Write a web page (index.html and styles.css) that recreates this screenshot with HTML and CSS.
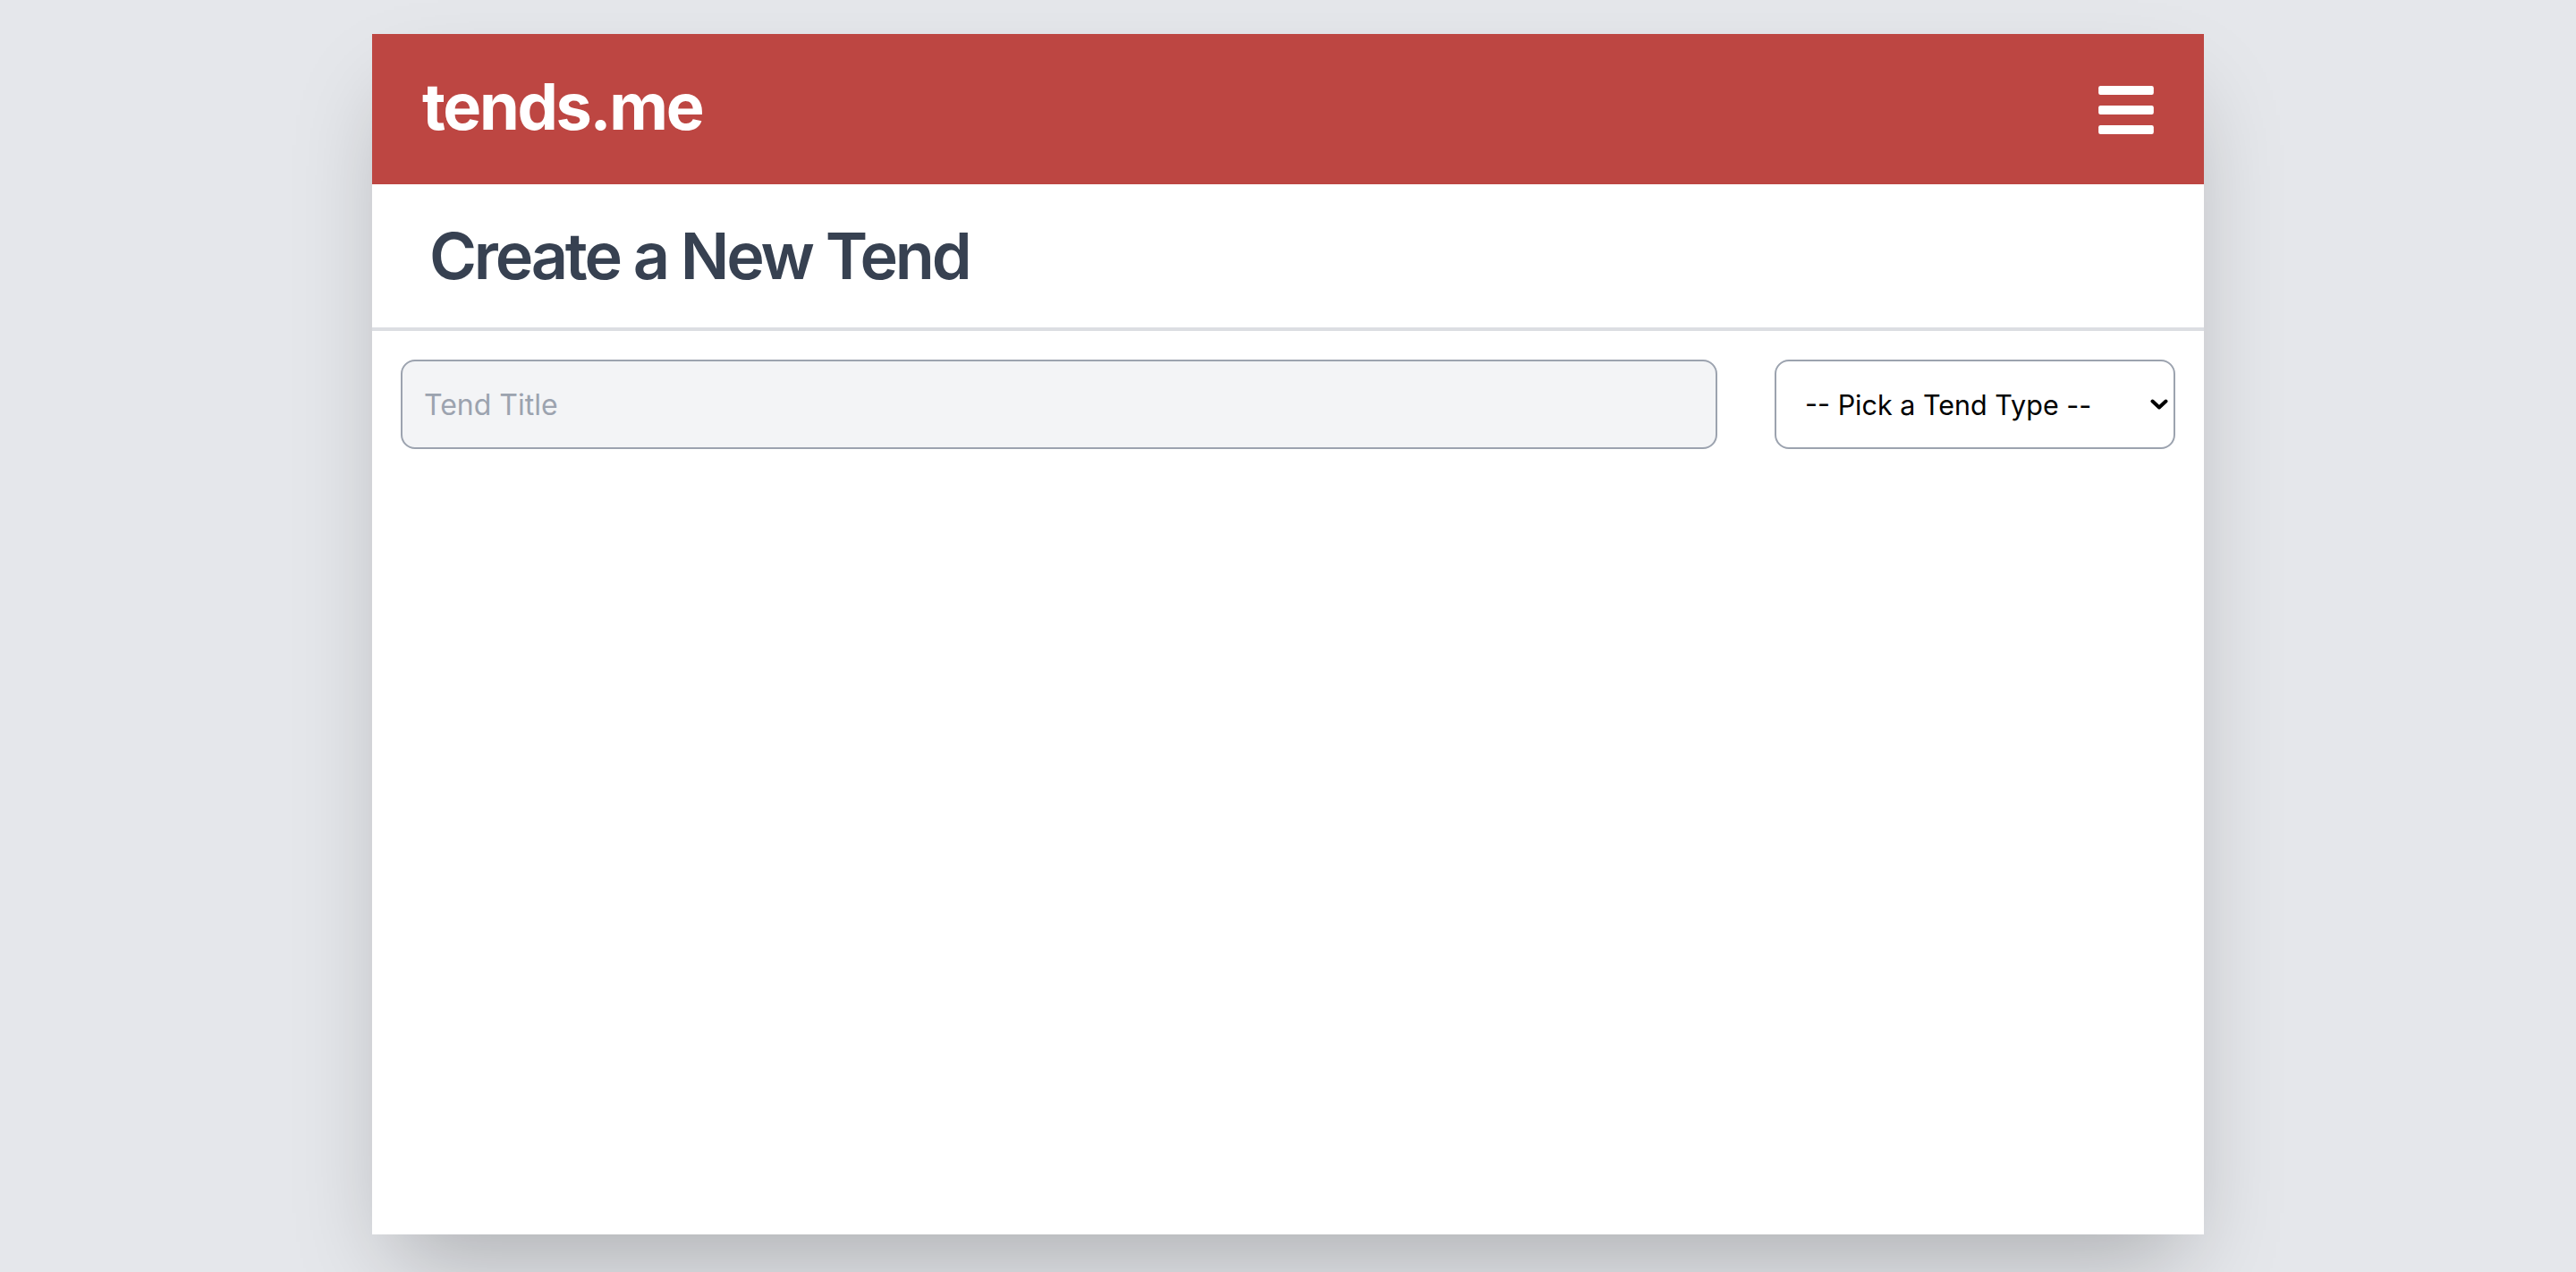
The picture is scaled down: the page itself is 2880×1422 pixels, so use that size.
FILE: index.html
```html
<!DOCTYPE html>
<html lang="en">
<head>
<meta charset="utf-8">
<title>tends.me</title>
<link rel="stylesheet" href="styles.css">
</head>
<body>
<div class="card">
  <header class="topbar">
    <div class="logo">tends.me</div>
    <button class="menu-btn" aria-label="Menu">
      <svg class="bars" viewBox="0 60 448 392" width="62" height="54" aria-hidden="true">
        <rect x="0" y="60" width="448" height="72" rx="16" fill="#fff"/>
        <rect x="0" y="220" width="448" height="72" rx="16" fill="#fff"/>
        <rect x="0" y="380" width="448" height="72" rx="16" fill="#fff"/>
      </svg>
    </button>
  </header>
  <div class="page-head">
    <h1 class="title">Create a New Tend</h1>
  </div>
  <form class="form-row">
    <input class="title-input" type="text" placeholder="Tend Title">
    <div class="select-wrap">
      <select class="type-select">
        <option>-- Pick a Tend Type --</option>
      </select>
      <svg class="chevron" viewBox="0 0 20 12" width="20" height="12" aria-hidden="true">
        <polyline points="2.5,2.5 10,9.5 17.5,2.5" fill="none" stroke="#000" stroke-width="4" stroke-linecap="round" stroke-linejoin="round"/>
      </svg>
    </div>
  </form>
</div>
</body>
</html>
```
FILE: styles.css
```css
* { box-sizing: border-box; }
html, body { margin: 0; padding: 0; }
body {
  background: #e5e7eb;
  font-family: Inter, "Noto Sans", "Liberation Sans", sans-serif;
  height: 1422px;
  overflow: hidden;
}
.card {
  width: 2048px;
  height: 1342px;
  margin: 38px auto 0;
  background: #fff;
  box-shadow: 0 50px 100px -24px rgba(0, 0, 0, 0.25);
}
.topbar {
  height: 168px;
  background: #bd4642;
  display: flex;
  align-items: center;
  justify-content: space-between;
  padding: 0 56px;
}
.logo {
  color: #fff;
  font-size: 72px;
  font-weight: 700;
  line-height: 80px;
  letter-spacing: -2.3px;
  padding-bottom: 6px;
}
.menu-btn {
  background: none;
  border: 0;
  padding: 0;
  display: flex;
  margin-top: 1px;
}
.bars { display: block; }
.page-head {
  padding: 40px 64px;
  border-bottom: 4px solid #dcdee2;
}
.title {
  margin: 0;
  color: #374151;
  font-size: 72px;
  font-weight: 600;
  line-height: 80px;
  letter-spacing: -3.2px;
}
.form-row {
  display: flex;
  gap: 64px;
  padding: 32px;
  margin: 0;
}
.title-input {
  flex: 1;
  height: 100px;
  border: 2px solid #9ca3af;
  border-radius: 16px;
  background: #f3f4f6;
  padding: 24px;
  font-family: Inter, "Noto Sans", sans-serif;
  font-size: 32px;
  line-height: 48px;
  color: #111827;
  outline: none;
}
.title-input::placeholder { color: #9ca3af; }
.select-wrap {
  position: relative;
  width: 448px;
  height: 100px;
}
.type-select {
  appearance: none;
  -webkit-appearance: none;
  width: 100%;
  height: 100%;
  border: 2px solid #9ca3af;
  border-radius: 16px;
  background: #fff;
  padding: 0 40px 0 32px;
  font-family: Inter, "Noto Sans", sans-serif;
  font-size: 30.5px;
  color: #000;
  outline: none;
}
.chevron {
  position: absolute;
  right: 8px;
  top: 44px;
  pointer-events: none;
}
```
